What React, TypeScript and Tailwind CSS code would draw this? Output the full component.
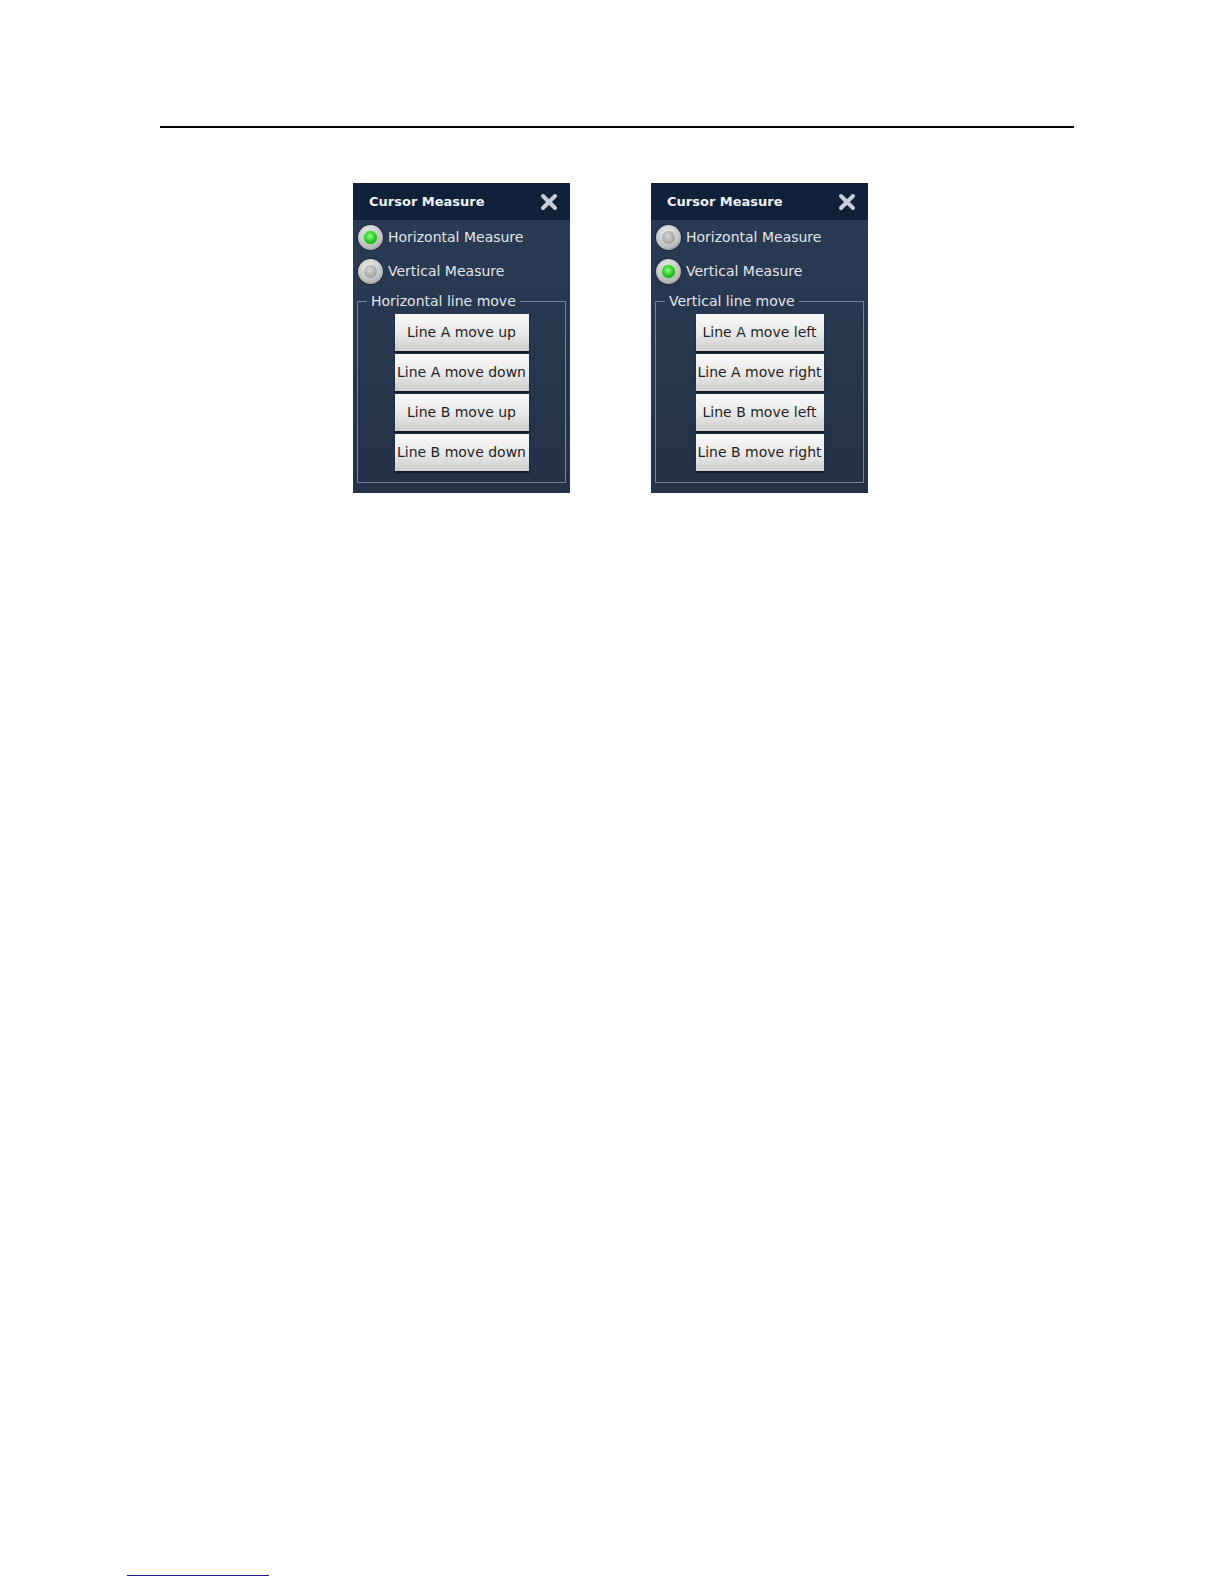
import React from "react";

type PanelProps = {
  selected: "h" | "v";
  legend: string;
  buttons: string[];
  btnWidth: string;
};

function Radio({ on }: { on: boolean }) {
  return (
    <span className="flex h-[25px] w-[25px] items-center justify-center rounded-full bg-[radial-gradient(circle_at_45%_35%,#f2f2f2,#c4c4c4_55%,#8c8c8c)] shadow-[0_0_2px_#0a1422]">
      {on ? (
        <span className="h-[13px] w-[13px] rounded-full bg-[radial-gradient(circle_at_45%_40%,#8dff7a,#22c41f_55%,#0e7a10)] shadow-[0_0_3px_#3be03a]" />
      ) : (
        <span className="h-[13px] w-[13px] rounded-full bg-[radial-gradient(circle_at_45%_40%,#d6d6d6,#a9a9a9_60%,#8a8a8a)]" />
      )}
    </span>
  );
}

function CloseIcon() {
  return (
    <svg width="18" height="18" viewBox="0 0 18 18">
      <path d="M3 3 L15 15 M15 3 L3 15" stroke="#c9ced6" strokeWidth="4" strokeLinecap="round" />
    </svg>
  );
}

function Panel({ selected, legend, buttons, btnWidth }: PanelProps) {
  return (
    <div className="flex w-[217px] flex-col bg-linear-to-b from-[#2a3c55] to-[#233248] pb-[10px] font-['DejaVu_Sans',sans-serif]">
      <div className="flex h-[37px] items-center justify-between bg-[#11213a] pl-[16px] pr-[12px]">
        <span className="text-[13px] font-bold text-[#eef1f5]">Cursor Measure</span>
        <CloseIcon />
      </div>

      <div className="flex h-[34px] items-center gap-[5px] pl-[5px]">
        <Radio on={selected === "h"} />
        <span className="text-[14px] text-[#e2e6ec]">Horizontal Measure</span>
      </div>
      <div className="flex h-[34px] items-center gap-[5px] pl-[5px]">
        <Radio on={selected === "v"} />
        <span className="text-[14px] text-[#e2e6ec]">Vertical Measure</span>
      </div>

      <fieldset className="mx-[4px] mt-[5px] border border-[#74849a] pb-[11px] pt-[5px]">
        <legend className="ml-[9px] px-[4px] text-[14px] leading-[16px] text-[#e2e6ec]">
          {legend}
        </legend>
        <div className="flex flex-col items-center gap-[3px]">
          {buttons.map((b) => (
            <div
              key={b}
              className={`${btnWidth} h-[37px] overflow-hidden whitespace-nowrap bg-linear-to-b from-[#f8f8f8] via-[#eaeaea] to-[#cdcdcd] text-center text-[14px] leading-[37px] text-[#1f1f1f] shadow-[0_2px_1px_#121b29]`}
            >
              {b}
            </div>
          ))}
        </div>
      </fieldset>
    </div>
  );
}

export default function App() {
  return (
    <div className="flex h-[1584px] w-[1224px] flex-col bg-white">
      <div className="ml-[160px] mt-[126px] h-[2px] w-[914px] bg-black" />

      <div className="ml-[353px] mt-[55px] flex gap-[81px]">
        <Panel
          selected="h"
          legend="Horizontal line move"
          btnWidth="w-[134px]"
          buttons={["Line A move up", "Line A move down", "Line B move up", "Line B move down"]}
        />
        <Panel
          selected="v"
          legend="Vertical line move"
          btnWidth="w-[128px]"
          buttons={["Line A move left", "Line A move right", "Line B move left", "Line B move right"]}
        />
      </div>

      <div className="mb-[8px] ml-[127px] mt-auto h-[1px] w-[142px] bg-[#1c1ca8]" />
    </div>
  );
}
